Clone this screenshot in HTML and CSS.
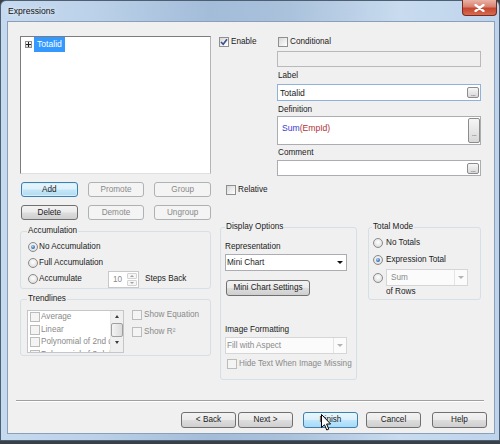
FILE: index.html
```html
<!DOCTYPE html>
<html>
<head>
<meta charset="utf-8">
<title>Expressions</title>
<link rel="stylesheet" href="styles.css">
</head>
<body>
<div class="window">
  <div class="titlebar">
    <span class="title">Expressions</span>
    <div class="close"><svg width="11" height="8" viewBox="0 0 11 8"><path d="M1.5 1 L9.5 7 M9.5 1 L1.5 7" stroke="#fff" stroke-width="2.2" stroke-linecap="round"/></svg></div>
  </div>
  <div class="client">
    <div class="body">
      <div class="leftcol">
        <div class="tree">
          <div class="tree-item">
            <span class="plus"><svg width="5" height="5" viewBox="0 0 5 5"><path d="M0 2.5H5M2.5 0V5" stroke="#1f1f1f" stroke-width="1"/></svg></span>
            <span class="sel">Totalid</span>
          </div>
        </div>
        <div class="btnrow">
          <div class="btn focus">Add</div>
          <div class="btn dis">Promote</div>
          <div class="btn dis">Group</div>
        </div>
        <div class="btnrow">
          <div class="btn">Delete</div>
          <div class="btn dis">Demote</div>
          <div class="btn dis">Ungroup</div>
        </div>
        <fieldset class="grp acc">
          <legend>Accumulation</legend>
          <div class="opt"><span class="radio on"></span><span>No Accumulation</span></div>
          <div class="opt"><span class="radio"></span><span>Full Accumulation</span></div>
          <div class="opt">
            <span class="radio"></span><span class="acclabel">Accumulate</span>
            <div class="spin"><span class="spinval">10</span><div class="spinbtns"><span class="sb up"></span><span class="sb down"></span></div></div>
            <span>Steps Back</span>
          </div>
        </fieldset>
        <fieldset class="grp trend">
          <legend>Trendlines</legend>
          <div class="trendrow">
            <div class="tlist">
              <div class="titems">
                <div class="titem"><span class="check dis"></span>Average</div>
                <div class="titem"><span class="check dis"></span>Linear</div>
                <div class="titem"><span class="check dis"></span>Polynomial of 2nd degree</div>
                <div class="titem"><span class="check dis"></span>Polynomial of 3rd degree</div>
              </div>
              <div class="vscroll">
                <div class="vs-btn up"></div>
                <div class="vs-thumb"></div>
                <div class="vs-btn down"></div>
              </div>
            </div>
            <div class="tchecks">
              <div class="chkrow dis"><span class="check dis"></span>Show Equation</div>
              <div class="chkrow dis"><span class="check dis"></span>Show R²</div>
            </div>
          </div>
        </fieldset>
      </div>
      <div class="rightcol">
        <div class="top">
          <div class="enablecol">
            <div class="chkrow"><span class="check on"><svg width="8" height="8" viewBox="0 0 8 8"><path d="M1 4 L3.2 6.3 L7 1.2" stroke="#3b4f8c" stroke-width="1.6" fill="none"/></svg></span>Enable</div>
          </div>
          <div class="form">
            <div class="chkrow cond"><span class="check"></span>Conditional</div>
            <div class="tb condbox"></div>
            <div class="flabel">Label</div>
            <div class="tb labelbox"><span class="tbtext">Totalid</span><span class="dots">...</span></div>
            <div class="flabel">Definition</div>
            <div class="tb defbox"><span class="deftext"><span class="sum">Sum</span><span class="arg">(EmpId)</span></span><span class="dots tall">...</span></div>
            <div class="flabel comment">Comment</div>
            <div class="tb combox"><span class="tbtext"></span><span class="dots">...</span></div>
          </div>
        </div>
        <div class="chkrow relrow"><span class="check"></span>Relative</div>
        <div class="groups">
          <fieldset class="grp disp">
            <legend>Display Options</legend>
            <div class="flab">Representation</div>
            <div class="combo"><span class="ctext">Mini Chart</span><span class="carrow"></span></div>
            <div class="btn mcs">Mini Chart Settings</div>
            <div class="flab imgf">Image Formatting</div>
            <div class="combo dis"><span class="ctext">Fill with Aspect</span><span class="carrow"></span></div>
            <div class="chkrow dis hiderow"><span class="check dis"></span>Hide Text When Image Missing</div>
          </fieldset>
          <fieldset class="grp total">
            <legend>Total Mode</legend>
            <div class="opt"><span class="radio"></span><span>No Totals</span></div>
            <div class="opt r2"><span class="radio on"></span><span>Expression Total</span></div>
            <div class="opt r3"><span class="radio"></span><div class="combo dis sumcombo"><span class="ctext">Sum</span><span class="carrow"></span></div></div>
            <div class="ofrows">of Rows</div>
          </fieldset>
        </div>
      </div>
    </div>
    <div class="sep"></div>
    <div class="footer">
      <div class="btn">&lt; Back</div>
      <div class="btn next">Next &gt;</div>
      <div class="btn hover finish">Finish
        <svg class="cursor" width="11" height="17" viewBox="0 0 11 17"><path d="M0.5 0.5 L0.5 13.5 L3.5 10.8 L5.8 16 L7.8 15.1 L5.6 10 L9.6 10 Z" fill="#fff" stroke="#000" stroke-width="1" stroke-linejoin="round"/></svg>
      </div>
      <div class="btn cancel">Cancel</div>
      <div class="btn help">Help</div>
    </div>
  </div>
</div>
</body>
</html>
```
FILE: styles.css
```css
* { box-sizing: border-box; }
html, body { margin: 0; padding: 0; }
body {
  width: 500px; height: 444px; overflow: hidden;
  background: #3a4048;
  font-family: "Liberation Sans", Arial, sans-serif;
  font-size: 8.2px; line-height: 12px; color: #1b1b1b;
}
.window {
  width: 500px; height: 441px;
  border: 1px solid #4f5f72; border-radius: 6px 6px 0 0;
  padding: 0 4px 6px 6px;
  display: flex; flex-direction: column;
  background: linear-gradient(90deg, #c6daef 0%, #bcd2ea 18%, #a3bcd8 42%, #aac2dc 58%, #c8dbef 80%, #bed4ec 100%);
}
.titlebar { height: 20px; display: flex; align-items: flex-start; }
.title {
  font-size: 8.6px; line-height: 12px; margin-top: 4px; padding-left: 1px;
  color: #111; text-shadow: 0 0 5px rgba(255,255,255,0.9);
}
.close {
  margin-left: auto; margin-right: -2px; margin-top: -1px;
  width: 35px; height: 16px;
  border: 1px solid #7a2b1f; border-top: none; border-radius: 0 0 4px 4px;
  background: linear-gradient(#eab2a6 0%, #d7826f 45%, #c6452e 55%, #d56d52 100%);
  display: flex; align-items: center; justify-content: center;
}
.client {
  flex: 1; background: #f0f0f0; border: 1px solid #8b9fb8;
  padding: 14px 0 0 12px;
  display: flex; flex-direction: column;
}
.body {
  height: 364px;
  display: grid; grid-template-columns: 191px 262px; column-gap: 8px;
  align-items: start;
}

/* left column */
.leftcol { display: flex; flex-direction: column; }
.tree {
  height: 138px; background: #fff;
  border: 1px solid; border-color: #7c7c7c #b5b5b5 #e0e0e0 #7c7c7c;
  padding: 0 0 0 4px;
}
.tree-item { display: flex; align-items: center; height: 15px; }
.plus {
  width: 7px; height: 7px; border: 1px solid #8f8f8f;
  background: linear-gradient(#ffffff, #d6d6d6);
  display: flex; align-items: center; justify-content: center;
  margin-right: 2px;
}
.plus svg { display: block; }
.sel { background: #3399ff; color: #fff; padding: 0 3px; height: 15px; line-height: 15px; font-size: 8.6px; }

.btnrow {
  display: grid; grid-template-columns: repeat(3, 1fr); column-gap: 10px;
  padding-left: 1px; margin-top: 8px;
}
.btn {
  height: 15px; border: 1px solid #707070; border-radius: 3px;
  background: linear-gradient(#f2f2f2 0%, #ebebeb 48%, #dddddd 52%, #cfcfcf 100%);
  display: flex; align-items: center; justify-content: center;
  color: #1b1b1b; position: relative; white-space: nowrap;
}
.btn.focus {
  border-color: #3c7fb1;
  background: linear-gradient(#e8f5fc 0%, #dcf0fb 48%, #c4e6f8 52%, #b1dcf3 100%);
  box-shadow: inset 0 0 0 1px #d4eefa;
}
.btn.hover {
  border-color: #3c7fb1;
  background: linear-gradient(#eaf6fd 0%, #d9f0fc 48%, #bee6fd 52%, #a7d9f5 100%);
}
.btn.dis { border-color: #adb2b5; background: #f4f4f4; color: #8a8a8a; }

.grp {
  margin: 0; min-width: 0;
  border: 1px solid #d5dfe5; border-radius: 3px;
  padding: 2px 6px 1px 6px;
}
.grp legend { padding: 0 1px; margin: 0; line-height: 12px; color: #1b1b1b; }
.acc { margin-top: 5px; }
.opt { display: flex; align-items: center; height: 16px; }
.radio {
  width: 10px; height: 10px; border-radius: 50%;
  border: 1px solid #8a8a8a;
  background: radial-gradient(circle at 50% 40%, #ffffff 0%, #e8e8e8 55%, #cfcfcf 100%);
  margin-left: 1px; margin-right: 1px; flex: none; position: relative;
}
.radio.on::after {
  content: ""; position: absolute; left: 2px; top: 2px; width: 4px; height: 4px; border-radius: 50%;
  background: radial-gradient(circle at 40% 35%, #a8d8f8 0%, #3d73b8 60%, #244f8c 100%);
}
.acclabel { width: 69px; }
.spin {
  width: 31px; height: 17px; border: 1px solid #c6c8cc; background: #fff;
  display: flex; margin-right: 6px; flex: none;
}
.spinval { flex: 1; color: #8a8a8a; padding-left: 4px; line-height: 15px; }
.spinbtns { width: 10px; display: flex; flex-direction: column; margin: 1px 1px 1px 0; gap: 1px; }
.sb {
  flex: 1; border: 1px solid #d3d3d3; border-radius: 1px; background: #f6f6f6;
  display: flex; align-items: center; justify-content: center;
}
.sb::before { content: ""; border-left: 2px solid transparent; border-right: 2px solid transparent; }
.sb.up::before { border-bottom: 2px solid #a0a0a0; }
.sb.down::before { border-top: 2px solid #a0a0a0; }

.trend { margin-top: 4px; padding: 5px 6px 2px 6px; }
.trendrow { display: flex; align-items: flex-start; }
.tlist {
  width: 97px; height: 43px; border: 1px solid #c4c6ca; background: #fff;
  display: flex; overflow: hidden; flex: none;
}
.titems { flex: 1; min-width: 0; overflow: hidden; padding-left: 2px; }
.titem { height: 12.5px; display: flex; align-items: center; white-space: nowrap; color: #8a8a8a; }
.check {
  width: 10px; height: 10px; border: 1px solid #8e8f8f;
  background: linear-gradient(135deg, #d8d8d8, #ffffff);
  flex: none; margin-right: 2px;
  display: flex; align-items: center; justify-content: center;
}
.check svg { display: block; }
.check.dis { border-color: #bcbcbc; background: #f4f4f4; }
.titem .check { margin-right: 1px; }
.vscroll {
  width: 13px; flex: none; background: #f0f0f0;
  display: flex; flex-direction: column; border-left: 1px solid #e8e8e8;
}
.vs-btn { height: 11px; display: flex; align-items: center; justify-content: center; }
.vs-btn::before { content: ""; border-left: 2.5px solid transparent; border-right: 2.5px solid transparent; }
.vs-btn.up::before { border-bottom: 3px solid #3c3c3c; }
.vs-btn.down::before { border-top: 3px solid #3c3c3c; }
.vs-thumb {
  height: 14px; margin: 1px 0 0 0;
  border: 1px solid #a0a0a0; border-radius: 2px;
  background: linear-gradient(90deg, #f4f4f4, #dcdcdc);
}
.tchecks { margin-left: 8px; margin-top: -1px; display: flex; flex-direction: column; gap: 4.7px; }
.chkrow { display: flex; align-items: center; height: 12px; white-space: nowrap; }
.chkrow.dis { color: #8a8a8a; }

/* right column */
.rightcol { display: flex; flex-direction: column; }
.top { display: flex; }
.enablecol { width: 58px; }
.form { width: 204px; display: flex; flex-direction: column; }
.cond { padding-left: 1px; }
.tb { border: 1px solid #abadb3; background: #fff; display: flex; align-items: center; }
.condbox { margin-top: 3px; height: 16px; background: #f0f0f0; border-color: #b9b9b9; }
.flabel { margin-top: 3px; padding-left: 1px; height: 12px; }
.flabel.comment { margin-top: 2px; }
.labelbox { margin-top: 2px; height: 17px; border-color: #8fb2da; }
.tbtext { flex: 1; padding-left: 2px; font-size: 8.6px; }
.dots {
  width: 12px; height: 11px; border: 1px solid #8c8c8c; border-radius: 2px;
  background: linear-gradient(#f6f6f6, #d8d8d8);
  margin-right: 1px; flex: none;
  display: flex; align-items: flex-end; justify-content: center;
  font-size: 7px; line-height: 7px; color: #555; letter-spacing: -0.5px;
}
.defbox { height: 29px; align-items: flex-start; }
.deftext { flex: 1; padding: 5px 0 0 4px; font-size: 8.6px; }
.dots.tall { height: 25px; margin-top: 1px; margin-right: 0; padding-bottom: 5px; }
.sum { color: #3a3ad6; }
.arg { color: #b03434; }
.combox { margin-top: 1px; height: 16px; }

.relrow { margin-top: 8px; padding-left: 7px; }
.groups { display: flex; align-items: flex-start; margin-top: 25px; padding-left: 1px; gap: 11px; }
.disp { width: 137px; padding: 8px 9px 9px 4px; }
.flab { height: 12px; }
.combo {
  height: 17px; margin-top: 1px; border: 1px solid #abadb3; background: #fff;
  display: flex; align-items: center; padding-left: 1px;
}
.ctext { flex: 1; white-space: nowrap; }
.carrow { width: 13px; height: 100%; display: flex; align-items: center; justify-content: center; }
.carrow::before {
  content: ""; border-left: 3px solid transparent; border-right: 3px solid transparent;
  border-top: 3px solid #111;
}
.combo.dis { color: #8a8a8a; background: #fbfbfb; border-color: #d6d6d6; }
.combo.dis .carrow { border-left: 1px solid #e4e4e4; }
.combo.dis .carrow::before { border-top-color: #b4b4b4; }
.mcs { margin-top: 9px; margin-left: 1px; width: 84px; height: 16px; }
.imgf { margin-top: 28px; }
.hiderow { margin-top: 4px; padding-left: 2px; }

.total { width: 113px; padding: 4px 4px 1px 3px; }
.total .opt { height: 12px; }
.total .radio { margin-right: 3px; }
.total .r2 { margin-top: 5px; }
.total .r3 { margin-top: 3px; height: 17px; }
.sumcombo { width: 82px; margin-top: 0; flex: none; }
.sumcombo .ctext { padding-left: 3px; }
.ofrows { padding-left: 14px; height: 12px; }

/* footer */
.sep {
  width: 468px; margin-left: -4px; height: 2px;
  border-top: 1px solid #a0a0a0; border-bottom: 1px solid #ffffff;
}
.footer { display: flex; justify-content: flex-end; padding: 10px 7px 0 0; }
.footer .btn { width: 55px; height: 16px; }
.footer .next { margin-left: 2px; }
.footer .finish { margin-left: 10px; }
.footer .cancel { margin-left: 8px; }
.footer .help { margin-left: 11px; }
.cursor { position: absolute; left: 17px; top: 1px; }
```
